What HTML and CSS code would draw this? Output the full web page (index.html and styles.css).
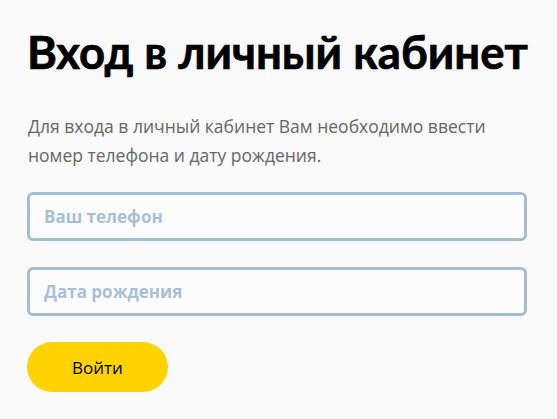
FILE: index.html
```html
<!DOCTYPE html>
<html lang="ru">
<head>
<meta charset="utf-8">
<link rel="stylesheet" href="styles.css">
</head>
<body>
<main class="login">
  <h1 class="title">Вход в личный кабинет</h1>
  <p class="lead">Для входа в личный кабинет Вам необходимо ввести номер телефона и дату рождения.</p>
  <form class="form">
    <input class="field" type="text" placeholder="Ваш телефон">
    <input class="field" type="text" placeholder="Дата рождения">
    <button class="btn" type="button">Войти</button>
  </form>
</main>
</body>
</html>
```
FILE: styles.css
```css
html, body {
  margin: 0;
  padding: 0;
  background: #f9f9f9;
}
body {
  font-family: "Open Sans", "Noto Sans", sans-serif;
}
.login {
  padding: 20px 30px 0 27px;
}
.title {
  margin: 0;
  font-family: Lato, "Open Sans", sans-serif;
  font-size: 45.5px;
  font-weight: 700;
  line-height: 64px;
  color: #000;
  white-space: nowrap;
  -webkit-text-stroke: 0.7px #000;
}
.lead {
  margin: 28px 0 0 1px;
  font-size: 17.5px;
  line-height: 29px;
  color: #666;
  max-width: 470px;
}
.form {
  margin-top: 22px;
  display: flex;
  flex-direction: column;
  align-items: flex-start;
}
.field {
  box-sizing: border-box;
  width: 500px;
  height: 49px;
  margin: 0 0 26px;
  padding: 0 14px;
  border: 3px solid #a3bdd3;
  border-radius: 6px;
  background: #fcfcfc;
  font-family: inherit;
  font-size: 17px;
  font-weight: 700;
  color: #333;
  outline: none;
}
.field::placeholder {
  color: #a8c0d6;
  opacity: 1;
}
.btn {
  width: 141px;
  height: 50px;
  border: none;
  border-radius: 25px;
  background: #ffd300;
  font-family: inherit;
  font-size: 17px;
  color: #000;
  padding: 0;
}
```
